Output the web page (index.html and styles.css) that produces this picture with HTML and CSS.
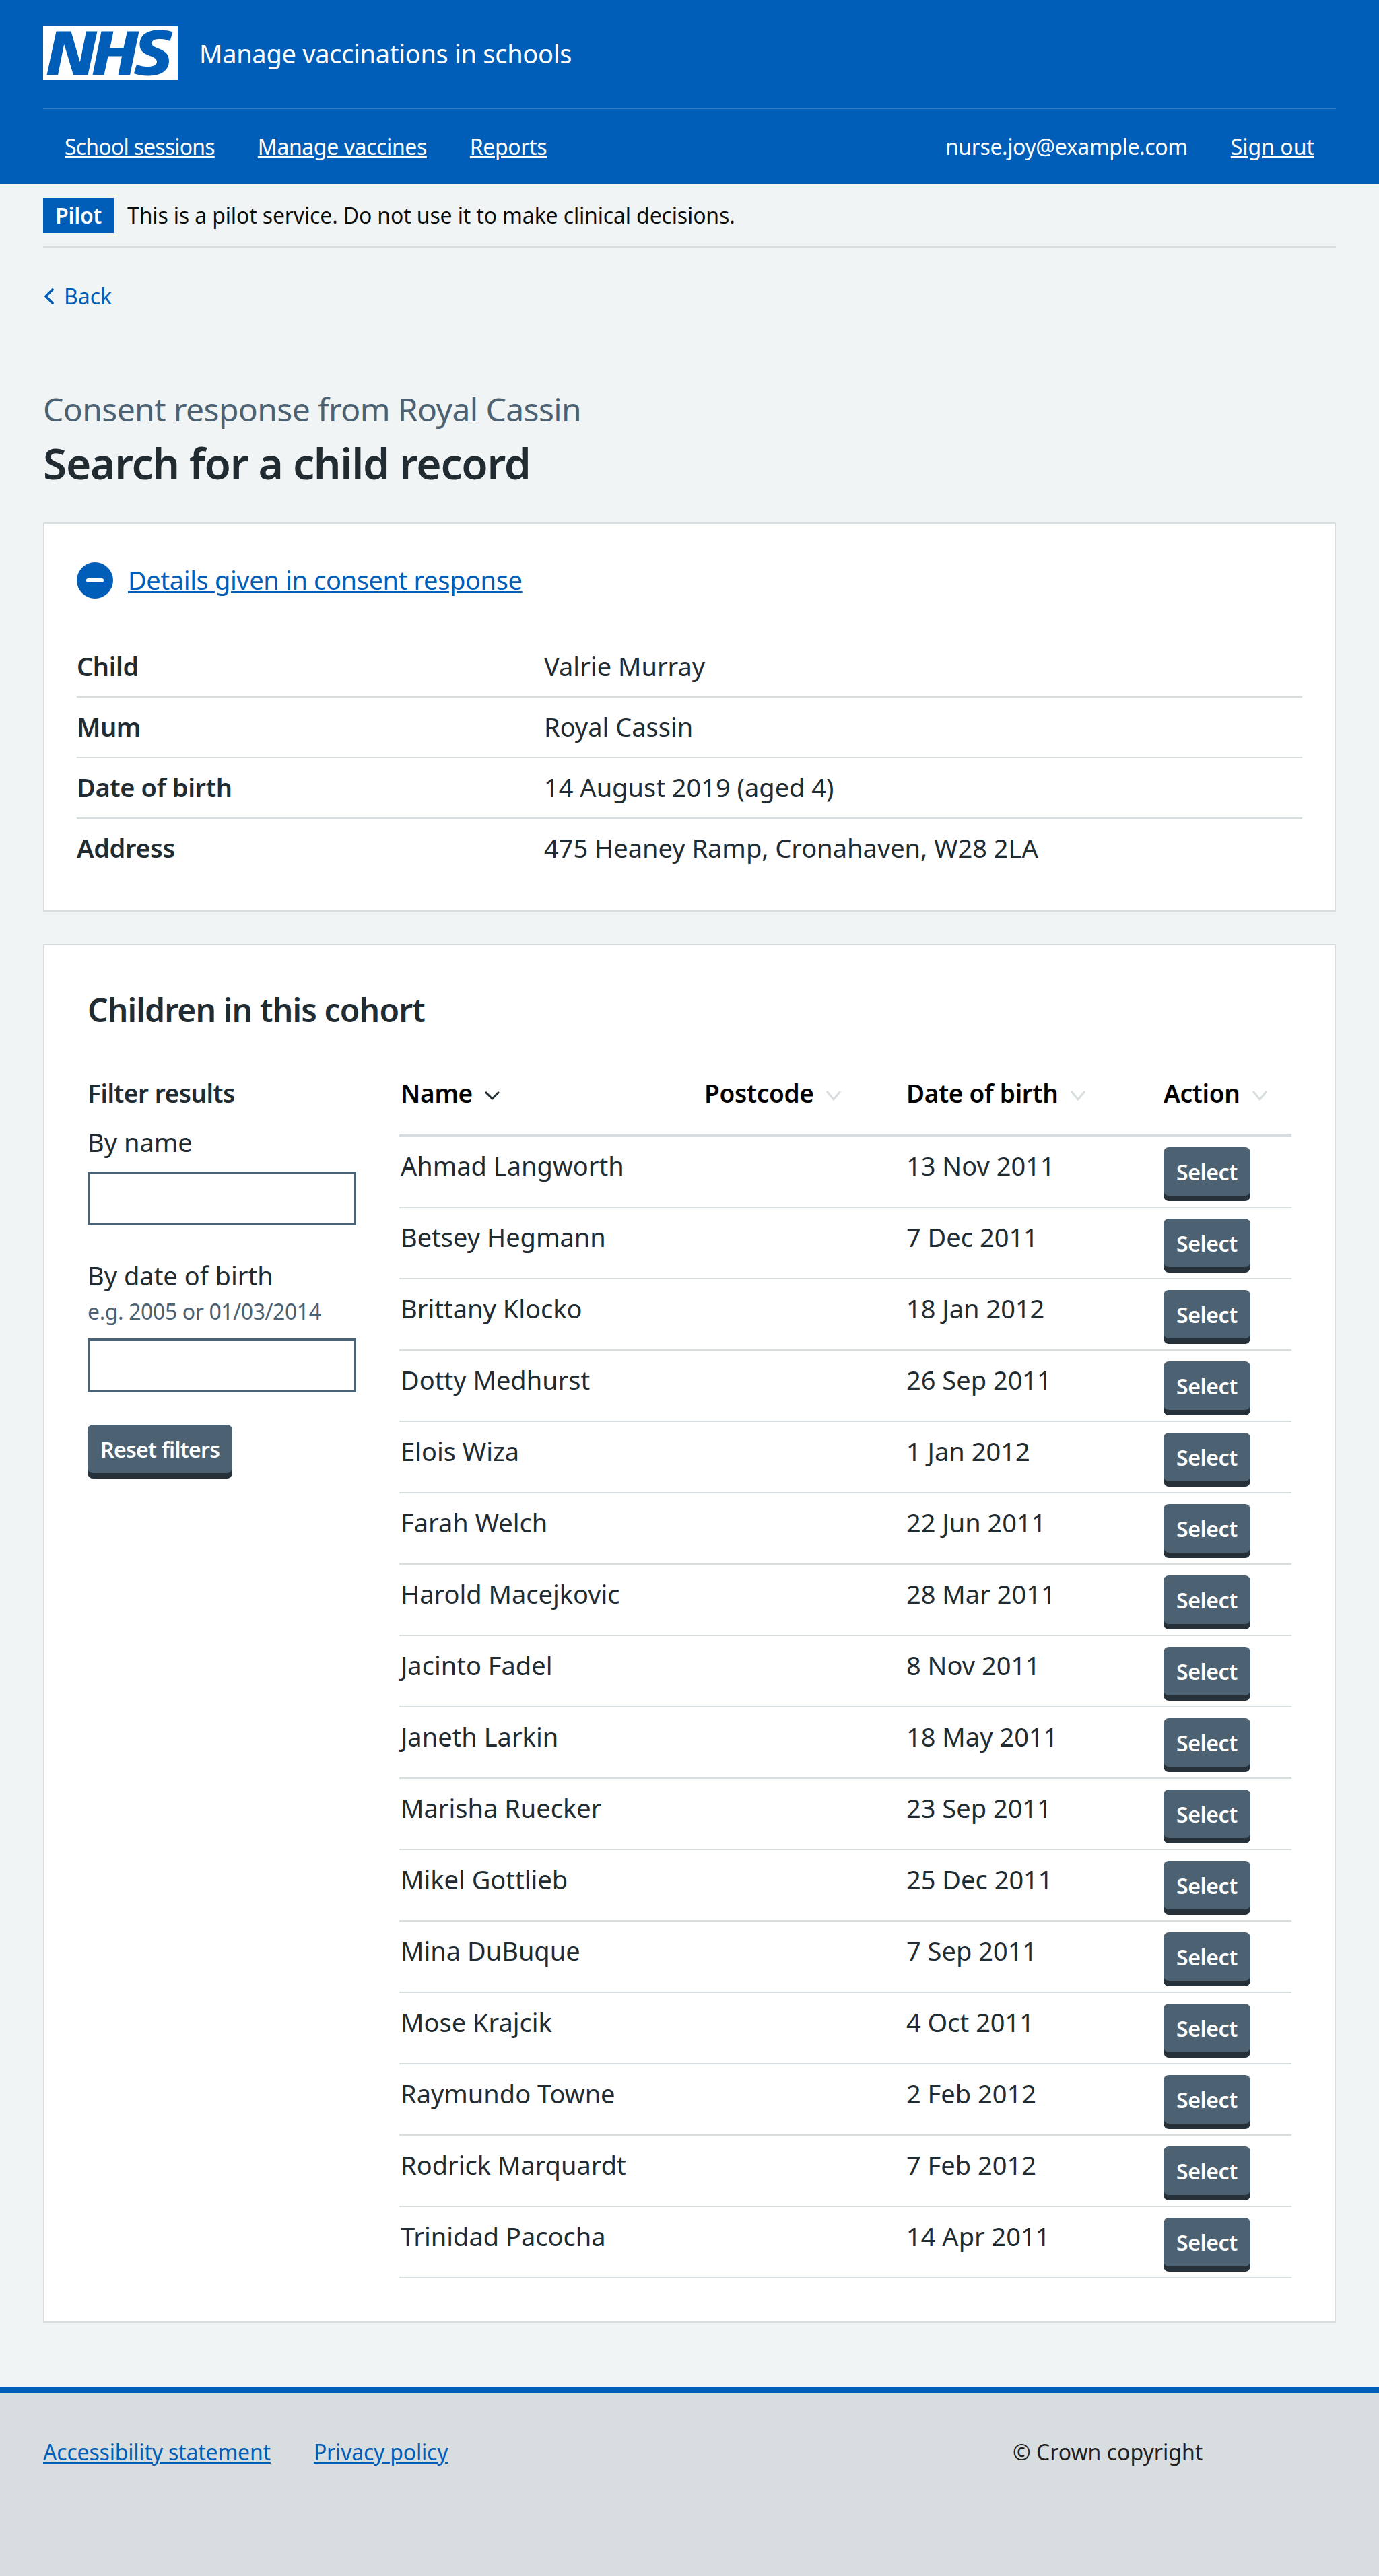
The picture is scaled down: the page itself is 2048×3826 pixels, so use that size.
FILE: index.html
```html
<!DOCTYPE html>
<html lang="en">
<head>
  <meta charset="UTF-8">
  <title>Search for a child record</title>
  <link rel="stylesheet" href="styles.css">
</head>
<body>

  <header class="site-header">
    <div class="brand">
      <svg class="logo" viewBox="0 0 40 16" aria-label="NHS">
        <path fill="#fff" d="M0 0h40v16H0z"></path>
        <path fill="#005eb8" d="M3.9 1.5h4.4l2.6 9h.1l1.8-9h3.3l-2.8 13H9l-2.7-9h-.1l-1.8 9H1.1M17.3 1.5h3.6l-1 4.9h4L25 1.5h3.5l-2.7 13h-3.5l1.1-5.6h-4.1l-1.2 5.6h-3.4M37.7 4.4c-.7-.3-1.6-.6-2.9-.6-1.4 0-2.5.2-2.5 1.3 0 1.8 5.1 1.2 5.1 5.1 0 3.6-3.3 4.5-6.4 4.5-1.3 0-2.9-.3-4-.7l.8-2.7c.7.4 2.1.7 3.2.7s2.8-.2 2.8-1.5c0-2.1-5.1-1.3-5.1-5 0-3.4 2.9-4.4 5.8-4.4 1.6 0 3.1.2 4 .6"></path>
      </svg>
      <span class="service-name">Manage vaccinations in schools</span>
    </div>
    <nav class="site-nav">
      <a class="tight" href="#">School sessions</a>
      <a href="#">Manage vaccines</a>
      <a href="#">Reports</a>
      <span class="user-email">nurse.joy@example.com</span>
      <a class="sign-out" href="#">Sign out</a>
    </nav>
  </header>

  <div class="pilot">
    <strong class="pilot-tag">Pilot</strong>
    <span>This is a pilot service. Do not use it to make clinical decisions.</span>
  </div>

  <main class="page">
    <a class="back-link" href="#">
      <svg viewBox="0 0 16 24" width="16" height="24"><path d="M14 2 4 12l10 10" fill="none" stroke="#005eb8" stroke-width="3.6" stroke-linecap="round" stroke-linejoin="round"></path></svg>
      Back
    </a>

    <p class="caption">Consent response from Royal Cassin</p>
    <h1>Search for a child record</h1>

    <section class="card details-card">
      <div class="details-toggle">
        <svg viewBox="0 0 54 54" width="54" height="54"><circle cx="27" cy="27" r="27" fill="#005eb8"></circle><rect x="14" y="24" width="26" height="6" rx="3" fill="#fff"></rect></svg>
        <a href="#">Details given in consent response</a>
      </div>
      <dl class="summary">
        <div><dt>Child</dt><dd>Valrie Murray</dd></div>
        <div><dt>Mum</dt><dd>Royal Cassin</dd></div>
        <div><dt>Date of birth</dt><dd>14 August 2019 (aged 4)</dd></div>
        <div><dt>Address</dt><dd>475 Heaney Ramp, Cronahaven, W28 2LA</dd></div>
      </dl>
    </section>

    <section class="card cohort-card">
      <h2>Children in this cohort</h2>
      <div class="cohort">
        <form class="filters">
          <h3>Filter results</h3>
          <label for="by-name">By name</label>
          <input type="text" id="by-name">
          <label class="dob-label" for="by-dob">By date of birth</label>
          <div class="hint">e.g. 2005 or 01/03/2014</div>
          <input type="text" id="by-dob">
          <button class="btn reset" type="button">Reset filters</button>
        </form>

        <table>
          <colgroup>
            <col class="col-name"><col class="col-postcode"><col class="col-dob"><col>
          </colgroup>
          <thead>
            <tr>
              <th>Name <svg class="sort active" viewBox="0 0 24 16"><path d="M2 3l10 10L22 3"></path></svg></th>
              <th>Postcode <svg class="sort" viewBox="0 0 24 16"><path d="M2 2l10 12L22 2"></path></svg></th>
              <th>Date of birth <svg class="sort" viewBox="0 0 24 16"><path d="M2 2l10 12L22 2"></path></svg></th>
              <th>Action <svg class="sort" viewBox="0 0 24 16"><path d="M2 2l10 12L22 2"></path></svg></th>
            </tr>
          </thead>
          <tbody>
            <tr><td>Ahmad Langworth</td><td></td><td>13 Nov 2011</td><td><button class="btn" type="button">Select</button></td></tr>
            <tr><td>Betsey Hegmann</td><td></td><td>7 Dec 2011</td><td><button class="btn" type="button">Select</button></td></tr>
            <tr><td>Brittany Klocko</td><td></td><td>18 Jan 2012</td><td><button class="btn" type="button">Select</button></td></tr>
            <tr><td>Dotty Medhurst</td><td></td><td>26 Sep 2011</td><td><button class="btn" type="button">Select</button></td></tr>
            <tr><td>Elois Wiza</td><td></td><td>1 Jan 2012</td><td><button class="btn" type="button">Select</button></td></tr>
            <tr><td>Farah Welch</td><td></td><td>22 Jun 2011</td><td><button class="btn" type="button">Select</button></td></tr>
            <tr><td>Harold Macejkovic</td><td></td><td>28 Mar 2011</td><td><button class="btn" type="button">Select</button></td></tr>
            <tr><td>Jacinto Fadel</td><td></td><td>8 Nov 2011</td><td><button class="btn" type="button">Select</button></td></tr>
            <tr><td>Janeth Larkin</td><td></td><td>18 May 2011</td><td><button class="btn" type="button">Select</button></td></tr>
            <tr><td>Marisha Ruecker</td><td></td><td>23 Sep 2011</td><td><button class="btn" type="button">Select</button></td></tr>
            <tr><td>Mikel Gottlieb</td><td></td><td>25 Dec 2011</td><td><button class="btn" type="button">Select</button></td></tr>
            <tr><td>Mina DuBuque</td><td></td><td>7 Sep 2011</td><td><button class="btn" type="button">Select</button></td></tr>
            <tr><td>Mose Krajcik</td><td></td><td>4 Oct 2011</td><td><button class="btn" type="button">Select</button></td></tr>
            <tr><td>Raymundo Towne</td><td></td><td>2 Feb 2012</td><td><button class="btn" type="button">Select</button></td></tr>
            <tr><td>Rodrick Marquardt</td><td></td><td>7 Feb 2012</td><td><button class="btn" type="button">Select</button></td></tr>
            <tr><td>Trinidad Pacocha</td><td></td><td>14 Apr 2011</td><td><button class="btn" type="button">Select</button></td></tr>
          </tbody>
        </table>
      </div>
    </section>
  </main>

  <footer class="site-footer">
    <div class="footer-links">
      <a href="#">Accessibility statement</a>
      <a href="#">Privacy policy</a>
    </div>
    <p class="copyright">© Crown copyright</p>
  </footer>

</body>
</html>
```

FILE: styles.css
```css
* {
  box-sizing: border-box;
}

body {
  margin: 0;
  font-family: "Noto Sans", sans-serif;
  font-size: 38px;
  line-height: 56px;
  color: #212b32;
  background: #f0f4f5;
}

a {
  color: #005eb8;
}

/* header */
.site-header {
  background: #005eb8;
  color: #fff;
  height: 274px;
  padding: 0 64px;
}

.site-header a {
  color: #fff;
}

.brand {
  display: flex;
  align-items: center;
  gap: 32px;
  height: 162px;
  padding-bottom: 2px;
  border-bottom: 2px solid #337ec6;
}

.logo {
  width: 200px;
  height: 80px;
}

.service-name {
  font-size: 38px;
  letter-spacing: -0.3px;
}

.site-nav {
  display: flex;
  gap: 64px;
  align-items: center;
  height: 112px;
  padding: 0 32px;
  font-size: 32px;
  letter-spacing: -0.4px;
}

.site-nav .tight {
  letter-spacing: -0.8px;
}

.site-nav .sign-out {
  letter-spacing: 0;
}

.user-email {
  margin-left: auto;
}

/* pilot banner */
.pilot {
  display: flex;
  align-items: center;
  gap: 20px;
  height: 94px;
  margin: 0 64px;
  padding: 20px 0;
  border-bottom: 2px solid #d8dde0;
  font-size: 32px;
  letter-spacing: -0.15px;
  color: #0b0c0c;
}

.pilot-tag {
  background: #005eb8;
  color: #fff;
  height: 52px;
  line-height: 52px;
  padding: 0 18px;
  font-weight: 600;
  letter-spacing: -0.3px;
}

/* main */
.page {
  padding: 0 64px;
  margin-bottom: 96px;
}

.back-link {
  display: flex;
  align-items: center;
  gap: 15px;
  margin-top: 44px;
  height: 56px;
  font-size: 32px;
  text-decoration: none;
}

.caption {
  margin: 108px 0 0;
  font-size: 48px;
  line-height: 64px;
  letter-spacing: -0.6px;
  color: #4c6272;
}

h1 {
  margin: 8px 0 48px;
  font-size: 64px;
  line-height: 80px;
  font-weight: 600;
  letter-spacing: -1.3px;
}

.card {
  background: #fff;
  border: 2px solid #d8dde0;
}

.details-card {
  padding: 56px 48px 48px;
}

.details-toggle {
  display: flex;
  align-items: center;
  gap: 22px;
  height: 56px;
  margin-bottom: 56px;
  letter-spacing: -0.37px;
}

.details-toggle a {
  margin-top: -2px;
}

.summary {
  margin: 0;
}

.summary div {
  display: grid;
  grid-template-columns: 694px 1fr;
  padding: 15px 0 17px;
  border-bottom: 2px solid #d8dde0;
}

.summary div:last-child {
  border-bottom: 0;
}

.summary dt {
  font-weight: 600;
  letter-spacing: -0.4px;
}

.summary dd {
  margin: 0;
}

.cohort-card {
  margin-top: 48px;
  padding: 64px;
}

h2 {
  margin: 0 0 56px;
  font-size: 48px;
  line-height: 64px;
  font-weight: 600;
  letter-spacing: -0.85px;
}

.cohort {
  display: grid;
  grid-template-columns: 399px 1fr;
  gap: 64px;
}

/* filters */
h3 {
  margin: 12px 0 20px;
  font-size: 37px;
  line-height: 48px;
  font-weight: 600;
  letter-spacing: -0.5px;
}

.filters label {
  display: block;
  margin-bottom: 16px;
}

.filters input {
  display: block;
  width: 100%;
  height: 80px;
  border: 4px solid #4c6272;
  background: #fff;
  margin-bottom: 48px;
}

.filters .dob-label {
  margin-top: -2px;
  margin-bottom: 2px;
}

.hint {
  margin-bottom: 16px;
  font-size: 32px;
  line-height: 48px;
  letter-spacing: -0.4px;
  color: #4c6272;
}

.btn {
  display: block;
  height: 72px;
  padding: 0 19px;
  border: 0;
  border-radius: 8px;
  background: #4c6272;
  color: #fff;
  font-family: inherit;
  font-size: 32px;
  font-weight: 600;
  letter-spacing: -0.4px;
  box-shadow: 0 8px 0 #263139;
}

.reset {
  letter-spacing: -0.7px;
}

/* table */
table {
  width: 100%;
  border-collapse: separate;
  border-spacing: 0;
  table-layout: fixed;
}

.col-name {
  width: 453px;
}

.col-postcode {
  width: 300px;
}

.col-dob {
  width: 382px;
}

th {
  height: 100px;
  padding: 0 0 24px;
  text-align: left;
  font-size: 37px;
  font-weight: 600;
  letter-spacing: -0.3px;
  color: #000;
  border-bottom: 4px solid #d8dde0;
}

td {
  vertical-align: top;
  padding: 15px 0 0;
  height: 106px;
  border-bottom: 2px solid #d8dde0;
}

td .btn {
  margin-top: 1px;
}

th:first-child,
td:first-child {
  padding-left: 2px;
}

.sort {
  width: 24px;
  height: 16px;
  margin-left: 8px;
  vertical-align: 3px;
}

.sort path {
  fill: none;
  stroke: #d8dde0;
  stroke-width: 3;
}

.sort.active path {
  stroke: #212b32;
}

/* footer */
.site-footer {
  display: grid;
  grid-template-columns: 3fr 1fr;
  height: 280px;
  padding: 60px 64px 0;
  border-top: 8px solid #005eb8;
  background: #d8dde0;
  font-size: 32px;
}

.footer-links {
  display: flex;
  gap: 64px;
  letter-spacing: -0.2px;
}

.copyright {
  margin: 0;
  color: #231f20;
}
```
